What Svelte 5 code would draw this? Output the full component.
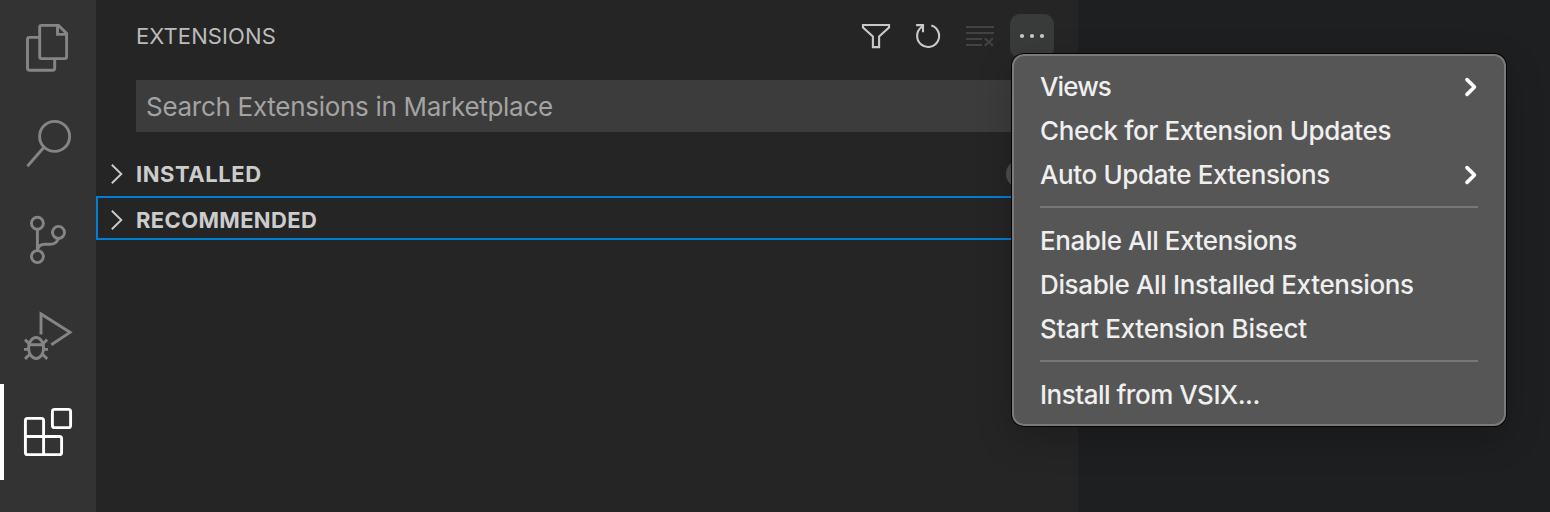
<script>
  const menu = [
    [{ label: 'Views', sub: true, tracking: -0.9 }, { label: 'Check for Extension Updates', tracking: -0.38 }, { label: 'Auto Update Extensions', sub: true, tracking: -0.38 }],
    [{ label: 'Enable All Extensions', tracking: -0.41 }, { label: 'Disable All Installed Extensions', tracking: -0.36 }, { label: 'Start Extension Bisect', tracking: -0.26 }],
    [{ label: 'Install from VSIX...', tracking: -0.5 }]
  ];
  const sections = ['INSTALLED', 'RECOMMENDED'];
</script>

<div class="window">
  <nav class="activity">
    <button aria-label="Explorer"><svg viewBox="0 0 96 96">
      <path d="M41.5 25.4H58.6L66.6 33.4V56.8Q66.6 58.6 64.8 58.6H41.5Q39.7 58.6 39.7 56.8V27.2Q39.7 25.4 41.5 25.4ZM57.5 25.5V34.4H66.5M39 37.4H29.5Q27.5 37.4 27.5 39.4V68.3Q27.5 70.3 29.5 70.3H52.6Q54.7 70.3 54.7 68.3V60" />
    </svg></button>
    <button aria-label="Search"><svg viewBox="0 0 96 96">
      <circle cx="54.6" cy="40.4" r="15" /><path d="M44 51.3L27.4 70.2" />
    </svg></button>
    <button aria-label="Source Control"><svg viewBox="0 0 96 96">
      <circle cx="37.4" cy="31.3" r="6" /><circle cx="58.5" cy="40.4" r="6" /><circle cx="37.4" cy="64.6" r="6" />
      <path d="M37.4 37.5V58.5C38 54 41 52.3 45 52.3H49.5C54 52.3 57.4 50 58.3 46.5" />
    </svg></button>
    <button aria-label="Run and Debug"><svg viewBox="0 0 96 96">
      <path d="M41 46.5V26L70 44.4L51.3 56.8" />
      <ellipse cx="36.1" cy="60" rx="7.5" ry="10.5" />
      <path d="M29 56.8H43.2M24 61.4H29M43 61.4H48M25 51.6L29.8 56.2M47.2 51.6L42.4 56.2M25 70.9L30 66M47.2 70.9L42.2 66" />
    </svg></button>
    <button class="active" aria-label="Extensions"><svg viewBox="0 0 96 96">
      <rect x="52.4" y="25.4" width="18.2" height="18.2" rx="2.2" />
      <path d="M27.6 34.4H41.4Q43.6 34.4 43.6 36.6V52.5H59.4Q61.6 52.5 61.6 54.7V68.4Q61.6 70.6 59.4 70.6H27.6Q25.4 70.6 25.4 68.4V36.6Q25.4 34.4 27.6 34.4ZM25.4 52.5H43.6V70.6" />
    </svg></button>
  </nav>

  <aside class="sidebar">
    <header>
      <h2>EXTENSIONS</h2>
      <div class="actions">
        <button aria-label="Filter"><svg viewBox="0 0 44 44"><path d="M9 11H35V13.5L25.1 22.5V33.1H18.9V22.5L9 13.5Z" /></svg></button>
        <button aria-label="Refresh"><svg viewBox="0 0 44 44"><path d="M25.3 11.4A11 11 0 1 1 15.3 13.3L17 12M10.1 11.1H17V18.2" /></svg></button>
        <button class="disabled" aria-label="Clear"><svg viewBox="0 0 44 44"><path d="M8 13H36M8 19H36M8 25H24M8 31H24M26.7 24.2L34.9 31.7M34.9 24.2L26.7 31.7" /></svg></button>
        <button class="open" aria-label="More"><svg viewBox="0 0 44 44"><circle cx="12" cy="22" r="2.1" /><circle cx="22" cy="22" r="2.1" /><circle cx="32" cy="22" r="2.1" /></svg></button>
      </div>
    </header>
    <div class="search"><span>Search Extensions in Marketplace</span></div>
    {#each sections as name, i}
      <div class="section" class:focused={i === 1}>
        <svg viewBox="0 0 40 40"><path d="M15.8 10.7L25.3 20L15.8 29.3" /></svg>
        <span>{name}</span>
        {#if i === 0}<i class="badge"></i>{/if}
      </div>
    {/each}
  </aside>
  <main></main>

  <div class="menu">
    {#each menu as group}
      <div class="group">
        {#each group as item}
          <div class="item"><span style:letter-spacing="{item.tracking}px">{item.label}</span>
            {#if item.sub}<svg viewBox="0 0 14 20"><path d="M3 2.6L10.5 10L3 17.4" /></svg>{/if}
          </div>
        {/each}
      </div>
    {/each}
  </div>
</div>

<style>
  :global(body) { margin: 0; background: #1e1f21; }
  .window { position: relative; display: flex; width: 1550px; height: 512px; overflow: hidden; background: #1e1f21; font-family: Inter, "Liberation Sans", sans-serif; }
  button { display: block; margin: 0; padding: 0; border: 0; background: none; }
  svg { display: block; fill: none; stroke: currentColor; }
  .activity { width: 96px; background: #333333; color: #858585; }
  .activity button { width: 96px; height: 96px; color: inherit; }
  .activity svg { width: 96px; height: 96px; stroke-width: 2.9; }
  .activity .active { color: #fff; box-shadow: inset 4px 0 #fff; }
  .sidebar { width: 982px; background: #252526; color: #ccc; }
  header { display: flex; justify-content: space-between; height: 66px; padding: 14px 24px 0 40px; }
  h2 { margin: 0; font-size: 22px; line-height: 44px; font-weight: 400; letter-spacing: .1px; color: #bbb; }
  .actions { display: flex; gap: 8px; color: #c9c9c9; }
  .actions button { width: 44px; height: 44px; border-radius: 10px; color: inherit; }
  .actions svg { width: 44px; height: 44px; stroke-width: 2.1; }
  .actions .disabled { color: #424242; }
  .actions .open { background: #383b3a; }
  .actions .open svg { fill: currentColor; stroke: none; }
  .search { height: 52px; margin: 0 24px 20px 40px; padding-left: 10px; background: #3c3c3c; color: #a3a3a3; font-size: 26px; line-height: 54px; letter-spacing: -.29px; white-space: nowrap; }
  .section { box-sizing: border-box; display: flex; align-items: center; height: 44px; font-size: 22px; font-weight: 700; line-height: 40px; letter-spacing: .55px; }
  .section svg { width: 40px; height: 40px; stroke-width: 1.9; }
  .focused { border: 2px solid #007fd4; padding-top: 4px; letter-spacing: .35px; }
  .focused svg { margin-left: -2px; }
  .badge { width: 40px; height: 28px; margin-left: auto; margin-right: 32px; border-radius: 14px; background: #4d4d4d; }
  main { flex: 1; background: #1e1f21; }
  .menu { position: absolute; left: 1012px; top: 54px; box-sizing: border-box; width: 494px; height: 372px; padding: 9px 26px; border: 2px solid #7a7a7a; border-radius: 12px; background: #565656; box-shadow: 0 0 0 1px #050505, 0 12px 36px rgba(0, 0, 0, .22); color: #efefef; }
  .group + .group { margin-top: 9px; padding-top: 11px; border-top: 2px solid #777; }
  .item { display: flex; align-items: center; justify-content: space-between; height: 44px; font-size: 26px; line-height: 44px; font-weight: 500; white-space: nowrap; }
  .item svg { width: 14px; height: 20px; color: #fff; stroke-width: 3.6; stroke-linecap: round; stroke-linejoin: round; }
</style>
